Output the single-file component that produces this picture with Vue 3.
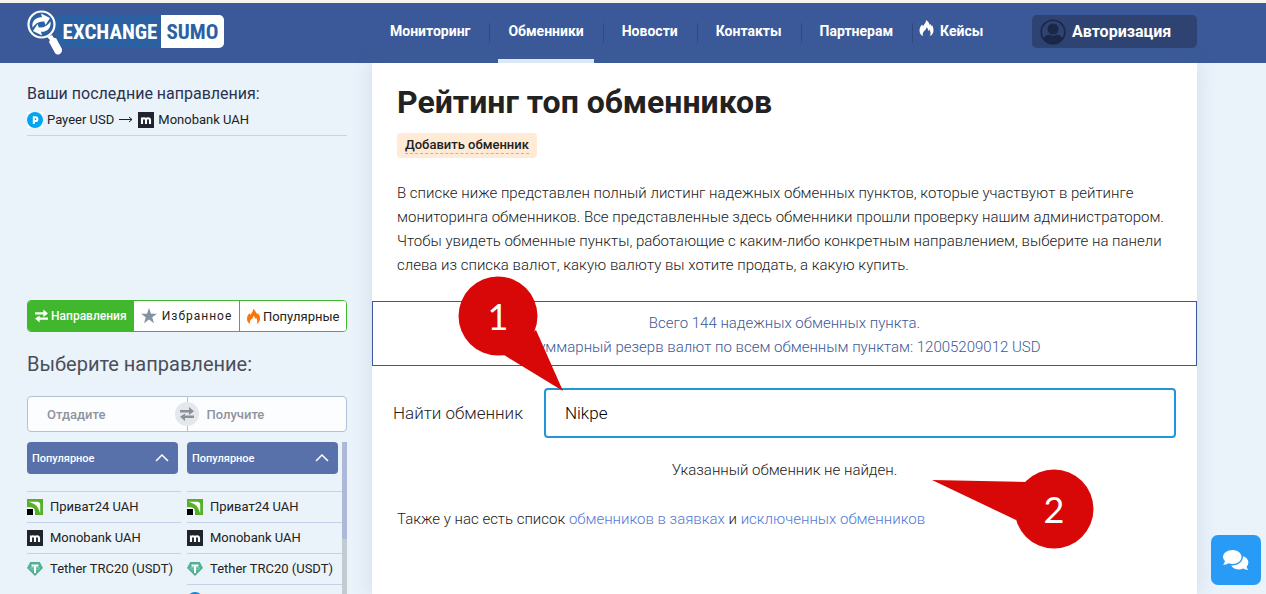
<script setup>
import { ref } from 'vue'

const query = ref('Nikpe')
const nav = [
  { label: 'Мониторинг' },
  { label: 'Обменники', active: true },
  { label: 'Новости' },
  { label: 'Контакты' },
  { label: 'Партнерам' },
  { label: 'Кейсы', flame: true }
]
const currencies = [
  { id: 'privat', name: 'Приват24 UAH' },
  { id: 'mono', name: 'Monobank UAH' },
  { id: 'tether', name: 'Tether TRC20 (USDT)' }
]
const columns = [
  { id: 'give', items: currencies },
  { id: 'get', items: [...currencies, { id: 'coin', name: '' }] }
]
const flamePath =
  'M6.4 0C7 2.6 4.6 4.2 3.6 6.4L2.6 4.6C1 6.400 0 8.300 0 10.400C0 13 1.400 15 3.400 16C2.700 13.600 3.600 12 4.900 10.800C6.200 9.700 7 8.800 6.900 7.200C8.400 8.200 8.800 9.600 8.500 10.900C9.300 10.600 9.600 9.900 9.600 9.200C11.400 11.400 11.400 14 10.400 16C12.700 15 14 12.900 14 10.400C14 7.900 13.300 6.300 12.400 5L11.800 6.400C11.500 5.300 11.300 4.500 10.500 3.800L10.200 5.300C9.600 2.900 8.600 1 6.400 0Z'
const swapPath = 'M0 3H9V0L14 4.200L9 8V5.400H0ZM14 11H5V14L0 9.800L5 6.500V8.600H14Z'
const logoArrow = 'M5.500 17.500C4.500 11 9 6.800 15 7.200L14 3.500L23 8L18.500 15L17.200 11.500C12 11 9 13 5.500 17.500Z'
</script>

<template>
  <div class="page">
    <header class="header">
      <a class="logo" href="#" aria-label="Exchange Sumo">
        <svg class="logo-glass" viewBox="0 0 36 46" aria-hidden="true">
          <path d="M20 27L25 25L27 28L29 28L35 39Q35.500 42 33 44Q30 45.500 28 43L22 32L23 30Z" fill="#fff" />
          <circle cx="14.500" cy="14.500" r="13" fill="#2b60a2" stroke="#fff" stroke-width="2.200" />
          <path :d="logoArrow" fill="#fff" />
          <path :d="logoArrow" fill="#fff" transform="rotate(180 14.500 14.500)" />
        </svg>
        <span class="logo-a">EXCHANGE</span><span class="logo-b">SUMO</span>
      </a>
      <nav class="nav">
        <ul>
          <li v-for="item in nav" :key="item.label" :class="{ flamed: item.flame }">
            <a href="#" :class="{ active: item.active }">
              <svg v-if="item.flame" class="flame" viewBox="0 0 14 16" aria-hidden="true"><path :d="flamePath" fill="#fff" /></svg>
              {{ item.label }}
            </a>
          </li>
        </ul>
      </nav>
      <button class="login" type="button">
        <svg viewBox="0 0 26 26" aria-hidden="true">
          <circle cx="13" cy="13" r="11.800" fill="none" stroke="#1a2747" stroke-width="1.600" />
          <circle cx="13" cy="10" r="5.500" fill="#1a2747" />
          <path d="M3.500 20C4.500 17 7 16 9 15.500Q13 18 17 15.500C19.500 16 21.500 17 22.500 20Q19 25 13 25Q7 25 3.500 20Z" fill="#1a2747" />
        </svg>
        Авторизация
      </button>
    </header>

    <div class="layout">
      <aside class="sidebar">
        <section class="recent">
          <h2>Ваши последние направления:</h2>
          <a class="route" href="#">
            <svg class="coin" viewBox="0 0 16 16" aria-hidden="true">
              <rect width="16" height="16" fill="#fff" />
              <circle cx="8" cy="8" r="8" fill="#04a5ef" />
              <path d="M6.800 12V5.300H8.500A1.900 1.900 0 0 1 8.500 9.100H6.800" fill="none" stroke="#fff" stroke-width="2" />
            </svg>
            <span>Payeer USD</span>
            <svg class="arrow" viewBox="0 0 14 8" aria-hidden="true"><path d="M0 3.500H13M10 1L13 3.500L10 6" fill="none" stroke="#222" /></svg>
            <svg class="coin" viewBox="0 0 16 16" aria-hidden="true">
              <rect width="16" height="16" fill="#22242d" />
              <path d="M4 12V5.500M4 8Q4 6.300 6 6.300Q8 6.300 8 8.300V12M8 8.300Q8 6.300 10 6.300Q12 6.300 12 8.300V12" fill="none" stroke="#fff" stroke-width="2.100" />
            </svg>
            <span>Monobank UAH</span>
          </a>
        </section>

        <div class="tabs">
          <button class="tab on" type="button">
            <svg class="swap" viewBox="0 0 14 14" aria-hidden="true"><path :d="swapPath" fill="#fff" /></svg>Направления
          </button>
          <button class="tab fav" type="button">
            <svg class="star" viewBox="0 0 16 16" aria-hidden="true"><path d="M8 0L10 5.700H16L11.200 9.300L13 15.200L8 11.600L3 15.200L4.800 9.300L0 5.700H6Z" fill="#8492a6" /></svg>Избранное
          </button>
          <button class="tab" type="button">
            <svg class="fire" viewBox="0 0 14 16" aria-hidden="true"><path :d="flamePath" fill="#ff7404" /></svg>Популярные
          </button>
        </div>

        <h2 class="choose">Выберите направление:</h2>

        <div class="pair">
          <input type="text" placeholder="Отдадите" aria-label="Отдадите" />
          <input type="text" placeholder="Получите" aria-label="Получите" />
          <button class="pair-swap" type="button" aria-label="Поменять местами">
            <svg viewBox="0 0 14 14" aria-hidden="true"><path :d="swapPath" fill="#8b8f96" /></svg>
          </button>
        </div>

        <div class="lists">
          <div v-for="col in columns" :key="col.id" class="col">
            <button class="group" type="button">
              Популярное
              <svg viewBox="0 0 14 8" aria-hidden="true"><path d="M1 7L7 1L13 7" fill="none" stroke="#fff" stroke-width="1.500" /></svg>
            </button>
            <ul>
              <li v-for="c in col.items" :key="c.id">
                <a href="#">
                  <svg class="coin" viewBox="0 0 16 16" aria-hidden="true">
                    <g v-if="c.id === 'privat'">
                      <rect width="16" height="16" fill="#57b127" />
                      <path d="M1.500 2.800H10Q13.200 2.800 13.200 6V14.500Q12 11 11.300 9.500Q9.800 6 6.500 4.700Q4.500 3.800 1.500 2.800Z" fill="#fff" />
                      <path d="M0 8.200H3Q8 8.200 8 13V16H6V10H0Z" fill="#fff" />
                      <rect y="10" width="6" height="6" fill="#000" />
                    </g>
                    <g v-else-if="c.id === 'mono'">
                      <rect width="16" height="16" fill="#22242d" />
                      <path d="M4 12V5.500M4 8Q4 6.300 6 6.300Q8 6.300 8 8.300V12M8 8.300Q8 6.300 10 6.300Q12 6.300 12 8.300V12" fill="none" stroke="#fff" stroke-width="2.100" />
                    </g>
                    <g v-else-if="c.id === 'tether'">
                      <path d="M3.200 1H12.800L16 7L8 15L0 7Z" fill="#52b095" />
                      <path d="M4.500 3.500H11.500V5.500H9V12H7V5.500H4.500Z" fill="#fff" />
                      <ellipse cx="8" cy="7.300" rx="4.500" ry="1.200" fill="none" stroke="#fff" stroke-opacity=".6" stroke-width=".6" />
                    </g>
                    <circle v-else cx="8" cy="8" r="8" fill="#1a82d2" />
                  </svg>
                  {{ c.name }}
                </a>
              </li>
            </ul>
          </div>
          <div class="track"><div class="thumb"></div></div>
        </div>
      </aside>

      <main class="main">
        <div class="intro">
          <h1>Рейтинг топ обменников</h1>
          <a class="add" href="#"><span>Добавить обменник</span></a>
          <p>
            В списке ниже представлен полный листинг надежных обменных пунктов, которые участвуют в рейтинге
            мониторинга обменников. Все представленные здесь обменники прошли проверку нашим администратором.
            Чтобы увидеть обменные пункты, работающие с каким-либо конкретным направлением, выберите на панели
            слева из списка валют, какую валюту вы хотите продать, а какую купить.
          </p>
        </div>
        <div class="summary">
          Всего 144 надежных обменных пункта.<br />
          Суммарный резерв валют по всем обменным пунктам: 12005209012 USD
        </div>
        <form class="search" @submit.prevent>
          <label for="exchanger">Найти обменник</label>
          <input id="exchanger" v-model="query" type="text" />
        </form>
        <p class="empty">Указанный обменник не найден.</p>
        <p class="also">
          Также у нас есть список <a href="#">обменников в заявках</a> и <a href="#">исключенных обменников</a>
        </p>

        <svg class="callout first" viewBox="0 0 106 116" role="img" aria-label="1">
          <path d="M78 54L105 115L46 79Z" fill="#d80808" />
          <circle cx="40" cy="40" r="39.500" fill="#d80808" />
          <text x="40" y="54" text-anchor="middle">1</text>
        </svg>
        <svg class="callout second" viewBox="0 0 162 80" role="img" aria-label="2">
          <path d="M0 11L94 13L84 51Z" fill="#d80808" />
          <circle cx="122" cy="40" r="39.500" fill="#d80808" />
          <text x="122" y="54" text-anchor="middle">2</text>
        </svg>
      </main>
    </div>

    <button class="chat" type="button" aria-label="Чат">
      <svg viewBox="0 0 26 20" aria-hidden="true">
        <path d="M9.500 0C14.500 0 18.500 3 18.500 7C18.500 11 14.500 14 9.500 14Q7.500 14 5.600 13.300Q3.500 14.800 0 14.800Q1.500 13 2 11.200Q0 9.200 0 7C0 3 4.500 0 9.500 0Z" fill="#fff" />
        <path d="M20 6.200C23.500 7 25.400 9.700 25.400 12.500Q25.400 15 23.500 16.800Q24 18.500 25.400 20Q22.500 20 20 18.600Q18 19.500 16 19.500C12.500 19.500 9.500 18 8.200 15.500C15 15.800 20.300 11.500 20 6.200Z" fill="#fff" />
      </svg>
    </button>
  </div>
</template>

<style>
body {
  background: #eaf2fa;
  overflow: hidden;
}
</style>

<style scoped>
* {
  box-sizing: border-box;
}
.page {
  display: flex;
  flex-direction: column;
  height: 100vh;
  overflow: hidden;
  font-family: Roboto, 'Liberation Sans', sans-serif;
  font-size: 13px;
  color: #222;
}
h1, h2, p, ul {
  margin: 0;
  padding: 0;
}
ul {
  list-style: none;
}
a {
  color: inherit;
  text-decoration: none;
}
button, input {
  margin: 0;
  padding: 0;
  border: 0;
  font: inherit;
  color: inherit;
}
svg {
  display: block;
  flex: none;
}
.header {
  display: flex;
  flex: none;
  height: 63px;
  padding: 0 69px 0 27px;
  border-top: 3px solid #f3f5ec;
  background: #3b5998;
}
.logo {
  display: flex;
  align-items: flex-start;
  width: 353px;
  font-family: 'Roboto Condensed', 'Liberation Sans Narrow', 'Liberation Sans', sans-serif;
  font-size: 21px;
  font-weight: 700;
  line-height: 34px;
  color: #fff;
}
.logo-glass {
  position: relative;
  width: 36px;
  height: 46px;
  margin-top: 7px;
}
.logo-a, .logo-b {
  margin-top: 12px;
  height: 33px;
  text-align: center;
}
.logo-a {
  width: 105px;
  margin-left: -7px;
  background: #2b60a2;
  padding-left: 3px;
}
.logo-b {
  width: 63px;
  border-radius: 0 5px 5px 0;
  background: #fff;
  color: #2b60a2;
}
.logo-glass {
  z-index: 1;
}
.nav {
  flex: 1;
}
.nav ul {
  display: flex;
}
.nav li {
  display: flex;
  align-items: center;
  height: 60px;
  padding-right: 9px;
}
.nav li + li::before {
  content: '';
  width: 1px;
  height: 20px;
  margin-right: 8px;
  background: #2f4a80;
}
.nav li.flamed::before {
  margin-right: 0;
}
.nav a {
  display: flex;
  align-items: center;
  height: 60px;
  padding: 0 10px;
  border-bottom: 4px solid transparent;
  font-size: 14px;
  font-weight: 700;
  color: #fff;
}
.nav a.active {
  border-bottom-color: #eaf2fa;
}
.nav .flamed a {
  padding: 0 6px;
}
.flame {
  width: 15px;
  height: 16px;
  margin: 0 6px 6px 0;
}
.login {
  display: flex;
  align-items: center;
  gap: 6px;
  width: 165px;
  height: 33px;
  margin-top: 12px;
  padding-left: 8px;
  border-radius: 5px;
  background: #2e4372;
  font-size: 16px;
  font-weight: 700;
  color: #fff;
}
.login svg {
  width: 26px;
  height: 26px;
}
.layout {
  display: flex;
  flex: 1;
  gap: 25px;
  min-height: 0;
  padding: 0 69px 0 27px;
}
.sidebar {
  display: flex;
  flex-direction: column;
  flex: none;
  width: 320px;
}
.recent {
  height: 73px;
  margin-bottom: 164px;
  padding-top: 20px;
  border-bottom: 1px solid #c9d3e8;
}
.recent h2 {
  font-size: 16px;
  font-weight: 400;
  line-height: 21px;
  color: #2a3350;
}
.route {
  display: flex;
  align-items: center;
  gap: 4px;
  height: 31px;
  color: #222;
}
.coin {
  width: 16px;
  height: 16px;
}
.arrow {
  width: 16px;
  height: 8px;
}
.tabs {
  display: flex;
  flex: none;
  height: 32px;
  border: 1px solid #41b72e;
  border-radius: 4px;
  overflow: hidden;
  background: #fff;
}
.tab {
  display: flex;
  flex: 1 1 0;
  align-items: center;
  justify-content: center;
  gap: 3px;
  background: #fff;
  border-left: 1px solid #41b72e;
}
.tab.on {
  border-left: 0;
  background: #41b72e;
  font-size: 12px;
  font-weight: 500;
  color: #fff;
}
.tab.fav {
  gap: 5px;
  border-left: 0;
  font-size: 12px;
  letter-spacing: 1px;
}
.swap {
  width: 13px;
  height: 14px;
}
.star {
  width: 16px;
  height: 16px;
}
.fire {
  width: 13px;
  height: 15px;
}
.choose {
  flex: none;
  padding: 20px 0;
  font-size: 20px;
  font-weight: 400;
  line-height: 24px;
  color: #4a4f58;
}
.pair {
  display: flex;
  flex: none;
  position: relative;
  height: 36px;
  border: 1px solid #b4c0d6;
  border-radius: 4px;
  background: #fcfdff;
}
.pair input {
  flex: 1;
  min-width: 0;
  padding-left: 19px;
  background: transparent;
  font-weight: 500;
}
.pair input + input {
  border-left: 1px solid #b4c0d6;
}
.pair input::placeholder {
  color: #8f949c;
  opacity: 1;
}
.pair-swap {
  display: grid;
  place-items: center;
  position: absolute;
  left: 50%;
  top: 50%;
  width: 24px;
  height: 24px;
  margin: -12px;
  border-radius: 50%;
  background: #e4e8ed;
}
.pair-swap svg {
  width: 14px;
  height: 14px;
}
.lists {
  display: grid;
  grid-template-columns: 154px 1fr 5px;
  flex: 1;
  min-height: 0;
  margin-top: 10px;
  overflow: hidden;
}
.col + .col {
  margin-left: 6px;
}
.group {
  display: flex;
  align-items: center;
  justify-content: space-between;
  width: 151px;
  height: 32px;
  margin-bottom: 17px;
  padding: 0 9px 0 5px;
  border-radius: 4px;
  background: #5871aa;
  font-size: 11px;
  font-weight: 500;
  color: #fff;
}
.group svg {
  width: 14px;
  height: 8px;
}
.col li {
  height: 31px;
  border-top: 1px solid #c6d0e8;
}
.col li a {
  display: flex;
  align-items: center;
  gap: 7px;
  height: 30px;
  line-height: 16px;
  color: #222;
  white-space: nowrap;
}
.track {
  background: #c3cbd0;
}
.thumb {
  height: 97px;
  background: #aeb9d9;
}
.main {
  position: relative;
  flex: 1;
  min-width: 0;
  background: #fff;
  box-shadow: 0 0 20px rgba(70, 120, 150, 0.16);
  font-size: 15px;
  font-weight: 300;
  line-height: 24px;
}
.intro {
  padding: 18px 25px 24px;
}
h1 {
  font-size: 32px;
  font-weight: 700;
  line-height: 42px;
}
.add {
  display: inline-flex;
  align-items: center;
  height: 25px;
  margin: 10px 0 23px;
  padding: 0 8px;
  border-radius: 4px;
  background: #ffead6;
  font-size: 13px;
  font-weight: 500;
  line-height: 16px;
  vertical-align: top;
}
.add span {
  border-bottom: 1px dashed #a9b6d8;
}
.summary {
  padding: 9px 24px 6px;
  border: 1px solid #3b5998;
  text-align: center;
  color: #3b5998;
}
.search {
  display: flex;
  align-items: center;
  gap: 21px;
  margin-top: 22px;
  padding: 0 21px;
  font-size: 17px;
}
.search input {
  flex: 1;
  min-width: 0;
  height: 50px;
  padding: 0 19px;
  border: 2px solid #2196d8;
  border-radius: 4px;
  background: #fff;
  color: #000;
  outline: 0;
}
.empty {
  margin-top: 20px;
  text-align: center;
}
.also {
  margin-top: 25px;
  padding: 0 25px;
}
.also a {
  color: #5179d6;
}
.callout {
  position: absolute;
  overflow: visible;
}
.callout text {
  font-family: Lato, 'Open Sans', sans-serif;
  font-size: 36px;
  font-weight: 400;
  fill: #fff;
}
.first {
  left: 86px;
  top: 213px;
  width: 106px;
  height: 116px;
}
.second {
  left: 560px;
  top: 406px;
  width: 162px;
  height: 80px;
}
.chat {
  display: grid;
  place-items: center;
  position: fixed;
  right: 5px;
  bottom: 9px;
  width: 50px;
  height: 50px;
  border-radius: 7px;
  background: #279bf6;
}
.chat svg {
  width: 26px;
  height: 20px;
}
</style>
